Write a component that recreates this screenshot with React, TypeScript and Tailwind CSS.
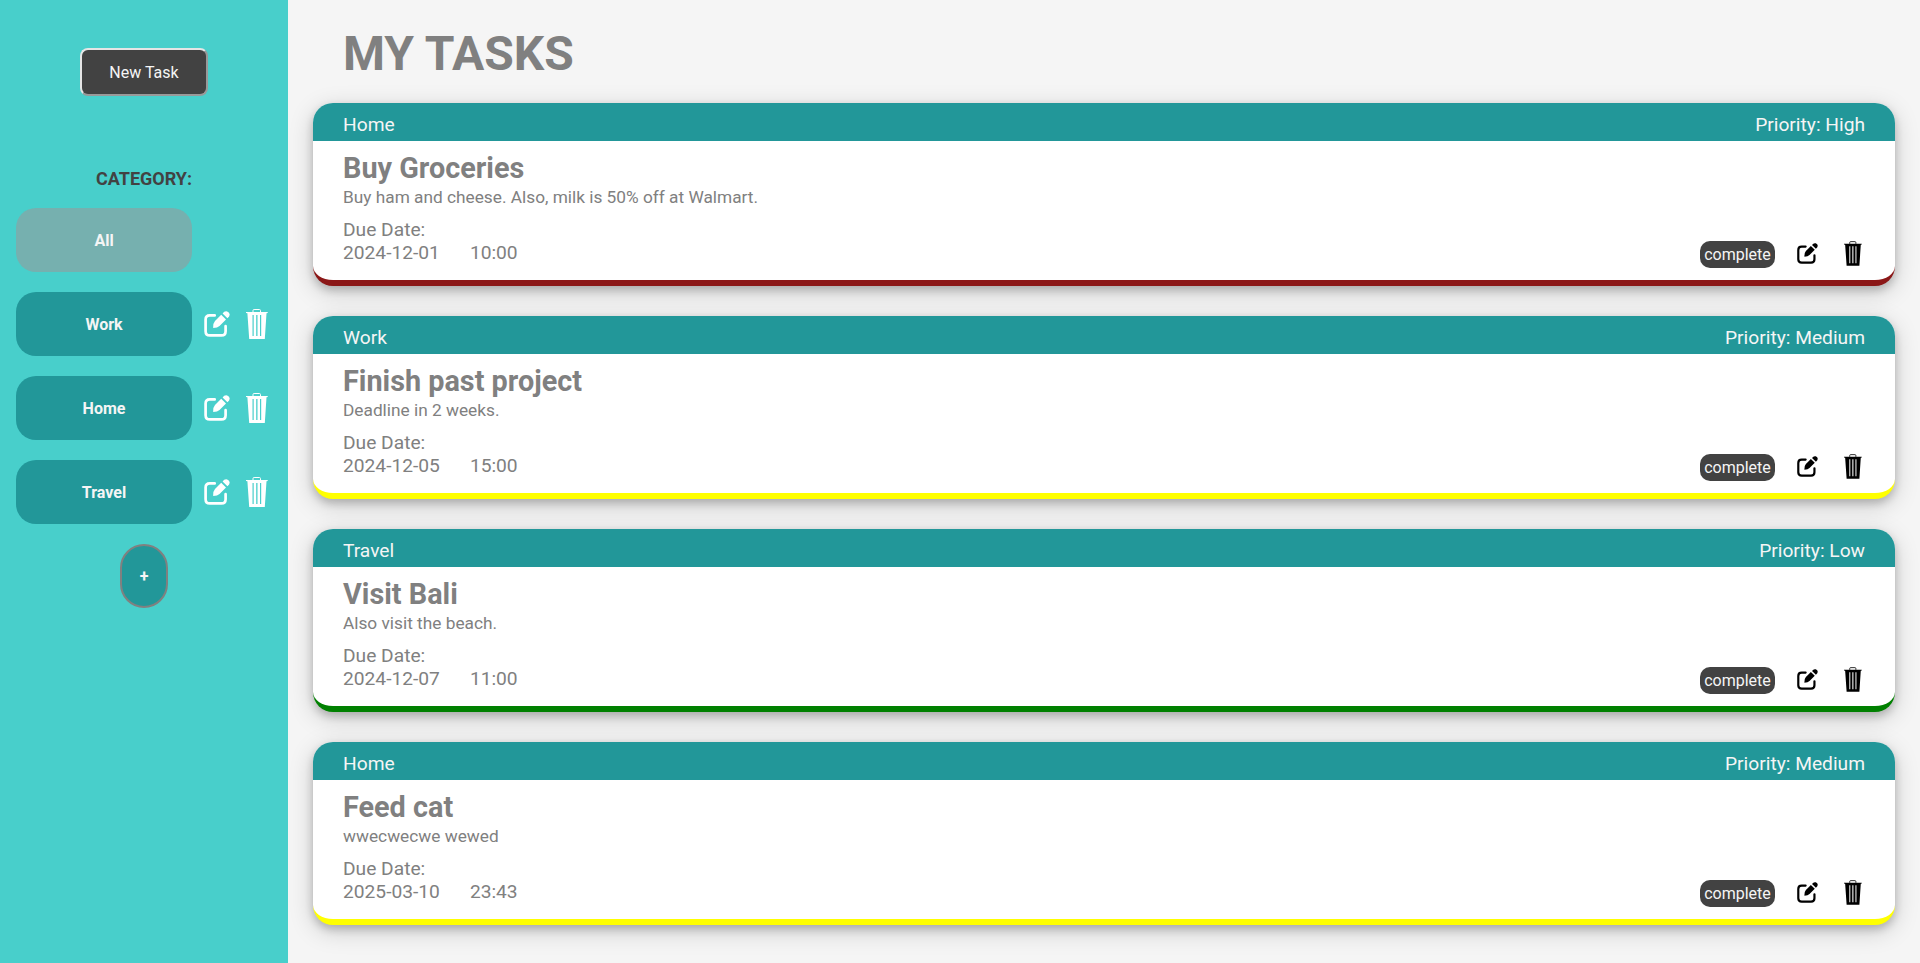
const TASKS = [
  { category: "Home", priority: "High", title: "Buy Groceries", note: "Buy ham and cheese. Also, milk is 50% off at Walmart.", date: "2024-12-01", time: "10:00", border: "border-[#8b1717]" },
  { category: "Work", priority: "Medium", title: "Finish past project", note: "Deadline in 2 weeks.", date: "2024-12-05", time: "15:00", border: "border-[#ffff00]" },
  { category: "Travel", priority: "Low", title: "Visit Bali", note: "Also visit the beach.", date: "2024-12-07", time: "11:00", border: "border-[#008000]" },
  { category: "Home", priority: "Medium", title: "Feed cat", note: "wwecwecwe wewed", date: "2025-03-10", time: "23:43", border: "border-[#ffff00]" },
];

function Edit({ className }: { className: string }) {
  return (
    <svg viewBox="0 0 26 26" fill="currentColor" className={className}>
      <path d="M10.700 4.400H5.800Q1.600 4.400 1.600 8.600V20.200Q1.600 24.400 5.800 24.400H17.400Q21.600 24.400 21.600 20.200V15.200" fill="none" stroke="currentColor" strokeWidth="2.700" strokeLinecap="round" />
      <path d="M17.200 3.700L22 8.500L15.500 14.900Q13.600 16.700 9.200 16.900Q9 12.200 11 10zM18.600 2.400Q20.400-.3 23.200.4Q25.600 1.200 25.700 3.500Q25.700 5.600 23.400 7.200z" />
    </svg>
  );
}

function Trash({ className }: { className: string }) {
  return (
    <svg viewBox="0 0 22 30" fill="currentColor" className={className}>
      <path d="M7 3.200V1.600Q7 .5 8.100 .5h5.300q1.100 0 1.100 1.100v1.600" fill="none" stroke="currentColor" />
      <path fillRule="evenodd" d="M0 3h21.700v.9l-1.200.4L18.800 30H3.200L1.400 4.300 0 3.900zM6.500 6v21h1.200V6zM10.200 6v21h1.300V6zM14 6v21h1.200V6z" />
    </svg>
  );
}

function CategoryRow({ name }: { name: string }) {
  return (
    <div className="flex items-center">
      <button className="h-16 w-44 rounded-[20px] bg-[#229799] pt-0.5 font-bold text-[#f5f5f5]">{name}</button>
      <Edit className="ml-3 size-[26px] text-white" />
      <Trash className="ml-4 h-[30px] w-[22px] text-white" />
    </div>
  );
}

export default function App() {
  return (
    <div className="flex h-[963px] bg-[#f5f5f5] font-[Roboto,sans-serif] text-base text-[#808080]">
      <aside className="relative z-10 flex w-72 shrink-0 flex-col bg-[#48cfcb] px-4 pt-12">
        <button className="h-12 w-32 self-center rounded-lg border-2 border-t-[#e5e5e5] border-r-[#999] border-b-[#999] border-l-[#e5e5e5] bg-[#424242] pt-0.5 text-[#f5f5f5]">New Task</button>
        <h2 className="mt-[70px] self-center text-lg leading-[26px] font-bold text-[#424242]">CATEGORY:</h2>
        <div className="mt-4 flex flex-col gap-5">
          <button className="h-16 w-44 rounded-[20px] bg-[#76b0af] pt-0.5 font-bold text-[#f5f5f5]">All</button>
          <CategoryRow name="Work" />
          <CategoryRow name="Home" />
          <CategoryRow name="Travel" />
          <button className="h-16 w-12 self-center rounded-3xl border-2 border-[#808080] bg-[#229799] pt-0.5 font-bold text-[#f5f5f5]">+</button>
        </div>
      </aside>
      <main className="min-w-0 flex-1 px-[25px]">
        <h1 className="h-[103px] pt-[26px] pl-[30px] text-[48px] leading-[56px] font-bold">MY TASKS</h1>
        <div className="flex flex-col gap-[30px]">
          {TASKS.map((task) => (
            <article key={task.title} className={`h-[183px] overflow-hidden rounded-[20px] border-b-[6px] bg-white shadow-[0_4px_8px_rgba(0,0,0,0.2),0_6px_24px_rgba(0,0,0,0.18)] ${task.border}`}>
              <header className="flex h-[38px] items-center justify-between bg-[#229799] px-[30px] pt-[4px] text-[19.2px] leading-[23px] text-[#f5f5f5]">
                <span>{task.category}</span>
                <span>Priority: {task.priority}</span>
              </header>
              <div className="flex h-[139px] items-end justify-between px-[30px]">
                <div className="h-full pt-[10px]">
                  <h3 className="text-[28.8px] leading-[34px] font-bold">{task.title}</h3>
                  <p className="mt-[2px] text-[17.28px] leading-5">{task.note}</p>
                  <p className="mt-[11px] text-[19.2px] leading-[23px]">Due Date:</p>
                  <p className="flex gap-[30px] text-[19.2px] leading-[23px]">
                    <span>{task.date}</span>
                    <span>{task.time}</span>
                  </p>
                </div>
                <div className="mb-3 flex h-[27px] items-start">
                  <button className="h-[27px] w-[75px] rounded-[10px] bg-[#424242] text-[#f5f5f5]">complete</button>
                  <Edit className="mt-[2px] ml-[22px] size-[21px] text-black" />
                  <Trash className="mr-[3px] ml-[26px] h-[25px] w-[18px] text-black" />
                </div>
              </div>
            </article>
          ))}
        </div>
      </main>
    </div>
  );
}
